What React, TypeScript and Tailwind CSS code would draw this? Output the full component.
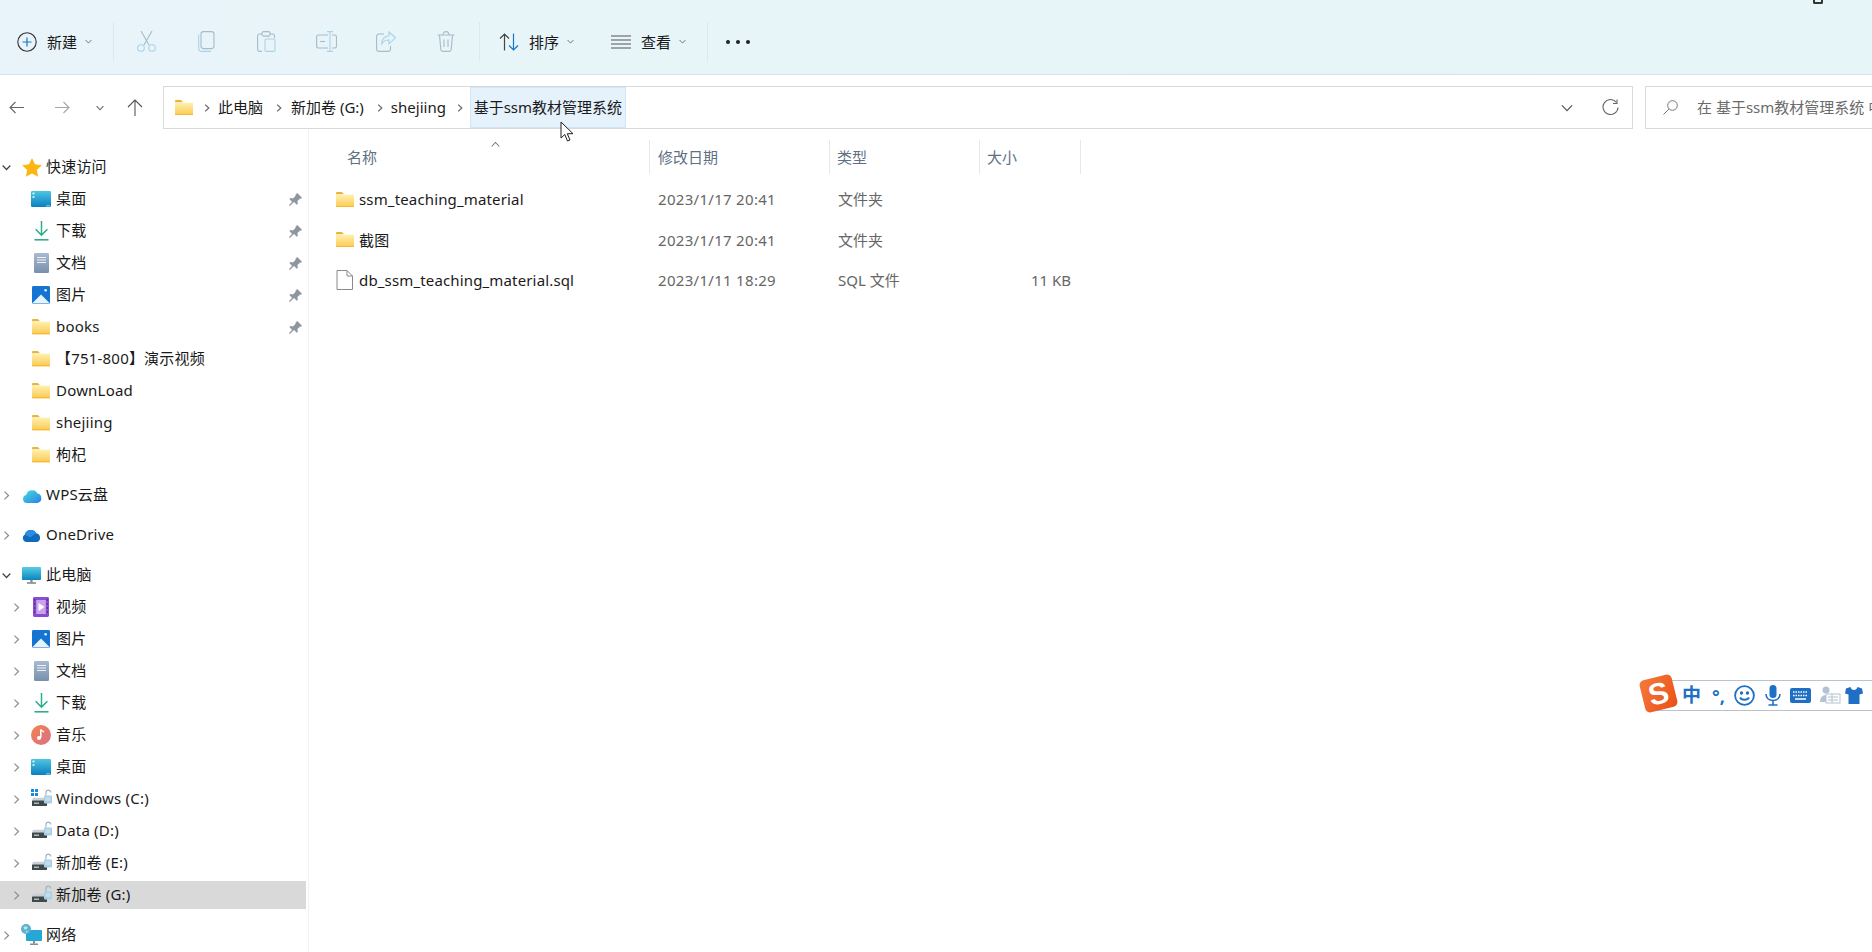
import React from "react";

const Chev = ({ d, c = "#777", w = 8, sw = 1.2 }: { d: "r" | "d" | "u"; c?: string; w?: number; sw?: number }) => (
  <svg width={w} height={w} viewBox="0 0 8 8" fill="none" stroke={c} strokeWidth={sw} className="shrink-0">
    {d === "r" && <path d="M2.2 .6 5.8 4 2.2 7.4" />}
    {d === "d" && <path d="M.6 2.2 4 5.8 7.4 2.2" />}
    {d === "u" && <path d="M.6 5.8 4 2.2 7.4 5.8" />}
  </svg>
);

const Folder = ({ w = 18 }: { w?: number }) => (
  <svg width={w} height={w * 0.85} viewBox="0 0 20 17" className="shrink-0">
    <defs>
      <linearGradient id="fg" x1="0" y1="0" x2="0" y2="1">
        <stop offset="0" stopColor="#fff0b0" />
        <stop offset="1" stopColor="#fcc94e" />
      </linearGradient>
    </defs>
    <path d="M0 1.5C0 .7.5 0 1.3 0h5.2l2.4 2.4H0z" fill="#eeb134" />
    <path d="M0 3h20v13c0 .6-.4 1-1 1H1c-.6 0-1-.4-1-1z" fill="url(#fg)" />
    <path d="M0 15.8h20v.4c0 .5-.4.8-1 .8H1c-.6 0-1-.3-1-.8z" fill="#f2b52f" />
  </svg>
);

const Star = () => (
  <svg width="20" height="19" viewBox="0 0 20 19">
    <path d="M10 0l3 6.2 6.8 1-4.9 4.7 1.2 6.8L10 15.5l-6.1 3.2 1.2-6.8L.2 7.2l6.8-1z" fill="#fdb714" />
  </svg>
);
const Desktop = () => (
  <svg width="20" height="16" viewBox="0 0 20 16">
    <defs>
      <linearGradient id="dg" x1="0" y1="0" x2="0" y2="1">
        <stop offset="0" stopColor="#4cc6e2" />
        <stop offset="1" stopColor="#0b7fc0" />
      </linearGradient>
    </defs>
    <rect width="20" height="16" rx="1.2" fill="url(#dg)" />
    <rect x="1.5" y="1.5" width="2" height="2" fill="#d8f4fb" />
    <rect x="1.5" y="5" width="2" height="2" fill="#bdebf6" />
    <rect x="15" y="14.5" width="4" height=".8" fill="#c9e9f4" />
  </svg>
);
const Download = () => (
  <svg width="15" height="20" viewBox="0 0 15 20" fill="none" stroke="#2fae8e" strokeWidth="1.5">
    <path d="M7.5 0v14M1.6 8.2l5.9 5.9 5.9-5.9" />
    <path d="M.5 18.8h14" strokeWidth="1.6" />
  </svg>
);
const Docs = () => (
  <svg width="15" height="20" viewBox="0 0 15 20">
    <defs>
      <linearGradient id="dc" x1="0" y1="0" x2="0" y2="1">
        <stop offset="0" stopColor="#a9b9d1" />
        <stop offset="1" stopColor="#7890ac" />
      </linearGradient>
    </defs>
    <rect width="15" height="20" rx="1.2" fill="url(#dc)" />
    <path d="M3 4.5h9M3 7h9M3 9.5h9" stroke="#eef2f7" strokeWidth="1" />
  </svg>
);
const Pics = () => (
  <svg width="18" height="18" viewBox="0 0 18 18">
    <rect width="18" height="18" rx="1.4" fill="#1573d1" />
    <path d="M0 17.5 9 8.5l9 9z" fill="#e6f4fc" />
    <circle cx="13.6" cy="4.2" r="1.3" fill="#e6f4fc" />
  </svg>
);
const Video = () => (
  <svg width="16" height="20" viewBox="0 0 16 20">
    <rect width="16" height="20" rx="1.4" fill="#8a4bd0" />
    <rect x="3.2" y="3" width="9.6" height="14" fill="#c8a4ee" />
    <path d="M5.5 6v8l6-4z" fill="#fff" />
    <path d="M1 3h1.3M1 7h1.3M1 11h1.3M1 15h1.3M13.7 3H15M13.7 7H15M13.7 11H15M13.7 15H15" stroke="#2c1a55" strokeWidth="1.2" />
  </svg>
);
const Music = () => (
  <svg width="20" height="20" viewBox="0 0 20 20">
    <defs>
      <linearGradient id="mg" x1="0" y1="0" x2="1" y2="1">
        <stop offset="0" stopColor="#f2824b" />
        <stop offset="1" stopColor="#d9708a" />
      </linearGradient>
    </defs>
    <circle cx="10" cy="10" r="10" fill="url(#mg)" />
    <path d="M9.8 4.5v8" stroke="#fff" strokeWidth="1.5" />
    <circle cx="8" cy="13" r="2.1" fill="#fff" />
    <path d="M10 4.4c.6 1.8 2.4 1.8 3 2.6" stroke="#fff" strokeWidth="1.3" fill="none" />
  </svg>
);
const Pc = () => (
  <svg width="19" height="17" viewBox="0 0 19 17">
    <defs>
      <linearGradient id="pg" x1="0" y1="0" x2="0" y2="1">
        <stop offset="0" stopColor="#55cde4" />
        <stop offset="1" stopColor="#0c84bd" />
      </linearGradient>
    </defs>
    <rect width="19" height="13" rx=".8" fill="url(#pg)" />
    <rect x="8.4" y="13" width="2.2" height="2.4" fill="#7c8a92" />
    <rect x="5" y="15.4" width="9" height="1.2" fill="#59666e" />
  </svg>
);
const WpsCloud = () => (
  <svg width="20" height="15" viewBox="0 0 20 15">
    <defs>
      <linearGradient id="wg" x1="0" y1="0" x2="1" y2="1">
        <stop offset="0" stopColor="#43e0d8" />
        <stop offset="1" stopColor="#2a7ee8" />
      </linearGradient>
    </defs>
    <path d="M5 15A4 4 0 0 1 4.2 7.1 6 6 0 0 1 15.5 5.6 4.8 4.8 0 0 1 15.5 15z" fill="url(#wg)" />
  </svg>
);
const OneDrive = () => (
  <svg width="21" height="14" viewBox="0 0 21 14">
    <path d="M5 14A4 4 0 0 1 3.8 6.6 6.2 6.2 0 0 1 15.2 5.2 4.6 4.6 0 0 1 16.2 14z" fill="#0f6cbd" />
    <path d="M3.8 6.6A6.2 6.2 0 0 1 15.2 5.2L9 9.5z" fill="#2a8de0" />
  </svg>
);
const Network = () => (
  <svg width="21" height="22" viewBox="0 0 21 22">
    <rect x="5" y="6" width="16" height="11" rx=".8" fill="#27a7d6" />
    <rect x="12" y="17" width="2" height="2.6" fill="#84929a" />
    <rect x="9" y="19.6" width="8" height="1.2" fill="#65727a" />
    <circle cx="5" cy="5" r="5" fill="#5bb2d6" />
    <path d="M2.4 3.2c1.4-1.4 3.2-1 4.4 0l-1.2 2.4-2.2-.2zM4.8 7l2.2.2-1.2 2z" fill="#bfe6d0" />
  </svg>
);
const Drive = ({ win }: { win?: boolean }) => (
  <svg width="21" height="20" viewBox="0 0 21 20">
    {win && (
      <g fill="#1e88d4">
        <rect x="0" y="0" width="3" height="3" />
        <rect x="4" y="0" width="3" height="3" />
        <rect x="0" y="4" width="3" height="3" />
        <rect x="4" y="4" width="3" height="3" />
      </g>
    )}
    <path d="M2 8.8h12v3H1z" fill="#c9cfd3" />
    <rect x="1" y="11.5" width="15" height="5.5" rx=".6" fill="#3f484d" />
    <path d="M3 14.2h5" stroke="#cfd6da" strokeWidth="1.2" />
    <path d="M15 6.4V3.4a2.3 2.3 0 0 1 4.6 0" fill="none" stroke="#9fb4c2" strokeWidth="1.2" />
    <rect x="13" y="6.4" width="8" height="8" rx=".8" fill="#a9cfe6" />
    <path d="M14.5 9h5M14.5 11h5" stroke="#e6f2f9" strokeWidth=".8" />
  </svg>
);
const Pin = () => (
  <svg width="13" height="13" viewBox="0 0 13 13" fill="#8e969e" className="shrink-0">
    <path d="M8.2 0 13 4.8l-1 1-.9-.3-2.6 2.6.3 2.6-1 1-2.8-2.8L.9 12.9 0 12l3.100-3.100L.4 6.100l1-1 2.600.3 2.600-2.600-.3-.9z" />
  </svg>
);
const FileIco = () => (
  <svg width="17" height="20" viewBox="0 0 17 20" fill="#fff" stroke="#8a8a8a" strokeWidth="1" className="shrink-0">
    <path d="M1 .5h10l5.500 5.500v13.500H1z" />
    <path d="M11 .5V6h5.500" fill="none" />
  </svg>
);

const Row = ({
  level,
  chev,
  icon,
  label,
  pin,
  active,
}: {
  level: 0 | 1;
  chev?: "r" | "d";
  icon: React.ReactNode;
  label: string;
  pin?: boolean;
  active?: boolean;
}) => (
  <div className="h-8 flex items-center">
    <div className={`h-7 w-[306px] flex items-center ${active ? "bg-[#d9d9d9]" : ""}`}>
      <div className={`flex items-center justify-center ${level === 0 ? "w-[13px]" : "w-[30px] pl-[2px]"}`}>
        {chev && <Chev d={chev} c={chev === "d" ? "#444" : "#8c8c8c"} w={9} sw={1.1} />}
      </div>
      <div className={`flex items-center justify-center ${level === 0 ? "w-[33px] pl-[5px] pr-[1px]" : "w-[26px] pr-[4px]"}`}>{icon}</div>
      <span className="pb-[1px] text-[15px] text-[#1a1a1a] whitespace-pre tracking-[0.2px]">{label}</span>
      {pin && (
        <div className="ml-auto mr-[4px]">
          <Pin />
        </div>
      )}
    </div>
  </div>
);

const Tb = ({ children }: { children: React.ReactNode }) => (
  <div className="w-[60px] flex justify-center items-center">{children}</div>
);
const Sep = () => <div className="w-px h-[39px] bg-[#dce9ec]" />;

const dis = "#a8bcc6";
const disB = "#a8d3ea";

const Col = ({ w, children, cls = "" }: { w: string; children?: React.ReactNode; cls?: string }) => (
  <div className={`${w} shrink-0 flex items-center h-full ${cls}`}>{children}</div>
);

const HeadCell = ({ w, label, pl }: { w: string; label: string; pl: string }) => (
  <div className={`${w} shrink-0 h-[34px] border-r border-[#e8e8e8] flex items-center ${pl}`}>
    <span className="text-[15px] text-[#5f7083]">{label}</span>
  </div>
);

const FileRow = ({ icon, name, date, type, size }: { icon: React.ReactNode; name: string; date: string; type: string; size?: string }) => (
  <div className="flex h-[40.500px]">
    <Col w="w-[324px]" cls="pl-[10px]">
      <div className="w-[23px]">{icon}</div>
      <span className="text-[15px] text-[#1a1a1a] tracking-[0.15px]">{name}</span>
    </Col>
    <Col w="w-[180px]" cls="pl-[8px]">
      <span className="text-[15px] text-[#666] tracking-[0.3px]">{date}</span>
    </Col>
    <Col w="w-[150px]" cls="pl-[8px]">
      <span className="text-[15px] text-[#666]">{type}</span>
    </Col>
    <Col w="w-[101px]" cls="justify-end pr-[10px]">
      <span className="text-[15px] text-[#666]">{size}</span>
    </Col>
  </div>
);

export default function App() {
  return (
    <div className="relative w-[1872px] h-[952px] overflow-hidden bg-white font-['Noto_Sans','Noto_Sans_CJK_SC',sans-serif]">
      {/* command bar */}
      <div className="h-[75px] pt-[9px] flex items-center bg-gradient-to-r from-[#e8f4f9] to-[#e6f5f7] border-b border-[#d3e3e6]">
        <div className="ml-[17px] flex items-center">
          <svg width="20" height="20" viewBox="0 0 20 20" fill="none">
            <circle cx="10" cy="10" r="9.200" stroke="#333" strokeWidth="1.1" />
            <path d="M10 5.500v9M5.500 10h9" stroke="#1478c8" strokeWidth="1.2" />
          </svg>
          <span className="ml-[10px] pt-[2px] text-[15px] text-[#1a1a1a]">新建</span>
          <div className="ml-[8px]">
            <Chev d="d" w={7} c="#666" sw={1} />
          </div>
        </div>
        <div className="ml-[21px]">
          <Sep />
        </div>
        <div className="ml-[2px] flex">
          <Tb>
            <svg width="19" height="21" viewBox="0 0 19 21" fill="none" stroke={dis} strokeWidth="1.1">
              <path d="M4 0l8 14M15 0 7 14" />
              <circle cx="4" cy="17" r="3.300" stroke={disB} />
              <circle cx="15" cy="17" r="3.300" stroke={disB} />
            </svg>
          </Tb>
          <Tb>
            <svg width="17" height="21" viewBox="0 0 17 21" fill="none" strokeWidth="1.1">
              <rect x="3" y=".6" width="13" height="17" rx="2.500" stroke={dis} />
              <path d="M.7 3.500v13.500c0 2 1.500 3.400 3.300 3.400h9" stroke={disB} />
            </svg>
          </Tb>
          <Tb>
            <svg width="19" height="21" viewBox="0 0 19 21" fill="none" strokeWidth="1.1" stroke={dis}>
              <path d="M5 3H2.500C1.300 3 .6 3.800.6 5v13c0 1.300.7 2.400 2 2.400H5" />
              <path d="M13 3h2.500c1.200 0 2 .8 2 2v2" />
              <rect x="5" y=".6" width="8" height="4.500" rx="1.500" />
              <rect x="8" y="8" width="10" height="12.400" rx="1.500" stroke={disB} />
            </svg>
          </Tb>
          <Tb>
            <svg width="21" height="21" viewBox="0 0 21 21" fill="none" strokeWidth="1.1" stroke={dis}>
              <path d="M12 4H2.500C1.300 4 .6 4.800.6 6v9c0 1.200.7 2 1.900 2H12M16 4h2.500c1.200 0 2 .8 2 2v9c0 1.200-.8 2-2 2H16" />
              <path d="M4 10.500h5" />
              <path d="M11 .6h6M11 20.400h6M14 .6v19.800" stroke={disB} />
            </svg>
          </Tb>
          <Tb>
            <svg width="20" height="21" viewBox="0 0 20 21" fill="none" strokeWidth="1.1">
              <path d="M8 3H3C1.600 3 .6 4 .6 5.500v12.400c0 1.500 1 2.500 2.400 2.500h9c1.500 0 2.500-1 2.500-2.500V15" stroke={dis} />
              <path d="M13 .8l6.400 6-6.400 6V9c-3.500 0-6 1.500-7.500 4.500C6 8.500 8.500 5 13 4.700z" stroke={disB} />
            </svg>
          </Tb>
          <Tb>
            <svg width="18" height="21" viewBox="0 0 18 21" fill="none" strokeWidth="1.1" stroke={dis}>
              <path d="M.6 4h16.800M2.500 4l1.300 14.500c.1 1.200.9 1.900 2 1.900h6.400c1.100 0 1.900-.7 2-1.900L15.500 4" />
              <path d="M6 4c0-2 1.200-3.400 3-3.400S12 2 12 4" />
              <path d="M7 8.500v7.500M11 8.500v7.500" />
            </svg>
          </Tb>
        </div>
        <div className="ml-[3px]">
          <Sep />
        </div>
        <div className="ml-[19px] flex items-center">
          <svg width="20" height="18" viewBox="0 0 20 18" fill="none" strokeWidth="1.200">
            <path d="M5.500 17.500V1M1 5.500 5.500 1 10 5.500" stroke="#444" />
            <path d="M14.500 .5V17M10 12.500 14.500 17 19 12.500" stroke="#1478c8" />
          </svg>
          <span className="ml-[10px] pt-[2px] text-[15px] text-[#1a1a1a]">排序</span>
          <div className="ml-[8px]">
            <Chev d="d" w={7} c="#666" sw={1} />
          </div>
        </div>
        <div className="ml-[37px] flex items-center">
          <svg width="20" height="14" viewBox="0 0 20 14" fill="none" stroke="#555" strokeWidth="1.200">
            <path d="M0 1h20M0 5h20M0 9h20M0 13h20" />
          </svg>
          <span className="ml-[10px] pt-[2px] text-[15px] text-[#1a1a1a]">查看</span>
          <div className="ml-[8px]">
            <Chev d="d" w={7} c="#666" sw={1} />
          </div>
        </div>
        <div className="ml-[21px]">
          <Sep />
        </div>
        <div className="ml-[18px] flex gap-[6px]">
          <div className="w-[4px] h-[4px] rounded-full bg-[#222]" />
          <div className="w-[4px] h-[4px] rounded-full bg-[#222]" />
          <div className="w-[4px] h-[4px] rounded-full bg-[#222]" />
        </div>
      </div>

      {/* address row */}
      <div className="h-[55px] pt-[11px] flex items-start">
        <div className="h-[43px] flex items-center">
          <svg className="ml-[9px]" width="15" height="13" viewBox="0 0 15 13" fill="none" stroke="#666" strokeWidth="1.100">
            <path d="M15 6.500H1M6.500 1 1 6.500 6.500 12" />
          </svg>
          <svg className="ml-[31px]" width="15" height="13" viewBox="0 0 15 13" fill="none" stroke="#a6a6a6" strokeWidth="1.100">
            <path d="M0 6.500h14M8.500 1 14 6.500 8.500 12" />
          </svg>
          <div className="ml-[26px]">
            <Chev d="d" w={8} c="#666" sw={1.1} />
          </div>
          <svg className="ml-[23px]" width="16" height="17" viewBox="0 0 16 17" fill="none" stroke="#555" strokeWidth="1.100">
            <path d="M8 17V1M1 8l7-7 7 7" />
          </svg>
        </div>
        <div className="ml-[20px] w-[1470px] h-[43px] border border-[#d9d9d9] flex items-center">
          <div className="ml-[11px]">
            <Folder w={18} />
          </div>
          <div className="ml-[10px]">
            <Chev d="r" w={8} c="#666" sw={1.2} />
          </div>
          <span className="ml-[7px] text-[15px] text-[#1a1a1a]">此电脑</span>
          <div className="ml-[12px]">
            <Chev d="r" w={8} c="#666" sw={1.2} />
          </div>
          <span className="ml-[8px] text-[15px] text-[#1a1a1a]">新加卷 (G:)</span>
          <div className="ml-[12px]">
            <Chev d="r" w={8} c="#666" sw={1.2} />
          </div>
          <span className="ml-[7px] text-[15px] text-[#1a1a1a]">shejiing</span>
          <div className="ml-[10px]">
            <Chev d="r" w={8} c="#666" sw={1.2} />
          </div>
          <div className="ml-[6px] w-[156px] h-[41px] bg-[#e5f1fb] border border-[#d3e6f5] flex items-center justify-center">
            <span className="text-[15px] text-[#1a1a1a] whitespace-nowrap">基于ssm教材管理系统</span>
          </div>
          <div className="ml-auto mr-[29px]">
            <Chev d="d" w={12} c="#555" sw={0.8} />
          </div>
          <svg className="mr-[13px]" width="17" height="17" viewBox="0 0 17 17" fill="none" stroke="#666" strokeWidth="1.100">
            <path d="M14.500 3.500A7.500 7.500 0 1 0 16 8.500" />
            <path d="M15 .5v4h-4" />
          </svg>
        </div>
        <div className="ml-[12px] flex-1 h-[43px] border border-r-0 border-[#d9d9d9] flex items-center overflow-hidden">
          <svg className="ml-[17px] shrink-0" width="15" height="15" viewBox="0 0 15 15" fill="none" stroke="#777" strokeWidth="1">
            <circle cx="9.500" cy="5.500" r="4.800" />
            <path d="M6 9 .5 14.500" />
          </svg>
          <span className="ml-[19px] text-[15px] text-[#6b6b6b] whitespace-nowrap">在 基于ssm教材管理系统 中</span>
        </div>
      </div>

      {/* body */}
      <div className="flex h-[822px]">
        <div className="w-[309px] shrink-0 pt-[21px] border-r border-[#f2f2f2] overflow-hidden">
          <Row level={0} chev="d" icon={<Star />} label="快速访问" />
          <Row level={1} icon={<Desktop />} label="桌面" pin />
          <Row level={1} icon={<Download />} label="下载" pin />
          <Row level={1} icon={<Docs />} label="文档" pin />
          <Row level={1} icon={<Pics />} label="图片" pin />
          <Row level={1} icon={<Folder />} label="books" pin />
          <Row level={1} icon={<Folder />} label="【751-800】演示视频" />
          <Row level={1} icon={<Folder />} label="DownLoad" />
          <Row level={1} icon={<Folder />} label="shejiing" />
          <Row level={1} icon={<Folder />} label="枸杞" />
          <div className="h-2" />
          <Row level={0} chev="r" icon={<WpsCloud />} label="WPS云盘" />
          <div className="h-2" />
          <Row level={0} chev="r" icon={<OneDrive />} label="OneDrive" />
          <div className="h-2" />
          <Row level={0} chev="d" icon={<Pc />} label="此电脑" />
          <Row level={1} chev="r" icon={<Video />} label="视频" />
          <Row level={1} chev="r" icon={<Pics />} label="图片" />
          <Row level={1} chev="r" icon={<Docs />} label="文档" />
          <Row level={1} chev="r" icon={<Download />} label="下载" />
          <Row level={1} chev="r" icon={<Music />} label="音乐" />
          <Row level={1} chev="r" icon={<Desktop />} label="桌面" />
          <Row level={1} chev="r" icon={<Drive win />} label="Windows (C:)" />
          <Row level={1} chev="r" icon={<Drive />} label="Data (D:)" />
          <Row level={1} chev="r" icon={<Drive />} label="新加卷 (E:)" />
          <Row level={1} chev="r" icon={<Drive />} label="新加卷 (G:)" active />
          <div className="h-2" />
          <Row level={0} chev="r" icon={<Network />} label="网络" />
        </div>

        <div className="flex-1 pl-[17px] pt-[10px]">
          <div className="relative flex">
            <HeadCell w="w-[324px]" label="名称" pl="pl-[21px]" />
            <HeadCell w="w-[180px]" label="修改日期" pl="pl-[8px]" />
            <HeadCell w="w-[150px]" label="类型" pl="pl-[7px]" />
            <HeadCell w="w-[101px]" label="大小" pl="pl-[7px]" />
            <div className="absolute left-[165px] top-0">
              <Chev d="u" w={9} c="#777" sw={0.9} />
            </div>
          </div>
          <div className="mt-[5px]">
            <FileRow icon={<Folder />} name="ssm_teaching_material" date="2023/1/17 20:41" type="文件夹" />
            <FileRow icon={<Folder />} name="截图" date="2023/1/17 20:41" type="文件夹" />
            <FileRow icon={<FileIco />} name="db_ssm_teaching_material.sql" date="2023/1/11 18:29" type="SQL 文件" size="11 KB" />
          </div>
        </div>
      </div>

      {/* mouse pointer */}
      <svg className="absolute left-[560px] top-[121px]" width="14" height="22" viewBox="0 0 14 22" fill="#fff" stroke="#222" strokeWidth="1">
        <path d="M1 1v16l3.800-3.500 2.700 6.500 2.500-1-2.700-6.300H13z" />
      </svg>

      {/* fragment at top right */}
      <div className="absolute left-[1813px] top-0 w-[10px] h-[4px] border-2 border-t-0 border-[#333] rounded-b-[2px]" />

      {/* input method bar */}
      <div className="absolute left-[1650px] top-[680px] w-[222px] h-[31px] bg-white border-y border-[#b9c2ce] flex items-center text-[#1f6fc4]">
        <span className="ml-[32px] text-[19px] font-bold leading-none">中</span>
        <span className="ml-[11px] text-[18px] font-bold leading-none">°,</span>
        <svg className="ml-[9px]" width="21" height="21" viewBox="0 0 21 21" fill="none" stroke="#1f6fc4" strokeWidth="1.800">
          <circle cx="10.500" cy="10.500" r="9.400" />
          <circle cx="7.500" cy="8" r=".8" />
          <circle cx="13.500" cy="8" r=".8" />
          <path d="M6 12.500c1.500 3 7.500 3 9 0" />
        </svg>
        <svg className="ml-[10px]" width="16" height="21" viewBox="0 0 16 21" fill="#1f6fc4">
          <rect x="4.500" y="0" width="7" height="13" rx="3.500" />
          <path d="M1 9c0 4 3 6.500 7 6.500S15 13 15 9M8 15.500V20M3.500 20h9" fill="none" stroke="#1f6fc4" strokeWidth="1.600" />
        </svg>
        <svg className="ml-[9px]" width="21" height="15" viewBox="0 0 21 15">
          <rect width="21" height="15" rx="2" fill="#1f6fc4" />
          <path d="M3 4h15M3 7.500h15" stroke="#fff" strokeWidth="1.500" strokeDasharray="1.500 1" />
          <path d="M5 11h11" stroke="#fff" strokeWidth="1.500" />
        </svg>
        <svg className="ml-[8px]" width="22" height="19" viewBox="0 0 22 19">
          <circle cx="7" cy="4" r="3.500" fill="#b4c2d2" />
          <path d="M1 16c0-4 2-7 6-7s5 3 5 7z" fill="#b4c2d2" />
          <rect x="7" y="8" width="14" height="9" fill="#fff" stroke="#b4c2d2" />
          <path d="M9 11h10M9 14h10M13 8v9" stroke="#b4c2d2" />
        </svg>
        <svg className="ml-[4px]" width="18" height="17" viewBox="0 0 18 17" fill="#1f6fc4">
          <path d="M5.500 0 1 1.500 0 6.500l3.500 1V17h11V7.500l3.500-1-1-5L12.500 0c-.5 2-1.800 3-3.500 3S6 2 5.500 0z" />
        </svg>
      </div>
      <div className="absolute left-[1642px] top-[677px] w-[33px] h-[33px] rounded-[5px] -rotate-[14deg] bg-gradient-to-br from-[#f47a3a] to-[#ea4f14] flex items-center justify-center">
        <span className="text-white text-[30px] font-black leading-none font-['Liberation_Sans',sans-serif]">S</span>
      </div>
    </div>
  );
}
